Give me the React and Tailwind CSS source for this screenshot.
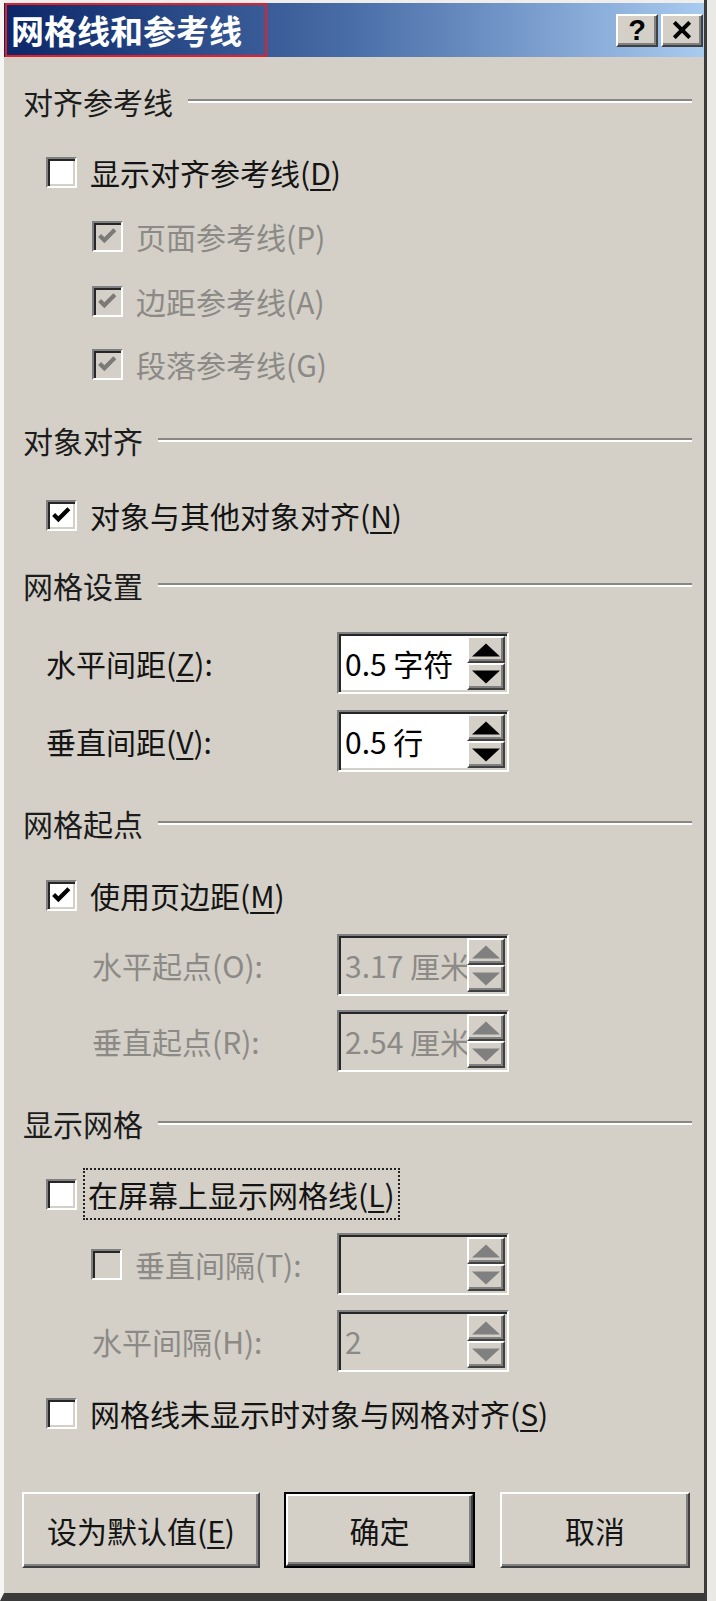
import React from "react";

const raised =
  "border-2 border-t-white border-l-white border-r-[#404040] border-b-[#404040] shadow-[inset_-2px_-2px_0_#808080] bg-[#d4d0c8]";
const sunken =
  "border-2 border-t-[#808080] border-l-[#808080] border-r-white border-b-white shadow-[inset_2px_2px_0_#262626,inset_-2px_-2px_0_#d4d0c8]";

function Key({ k, on = true }) {
  return (
    <>
      (<span className={on ? "underline decoration-2 underline-offset-[4px]" : ""}>{k}</span>)
    </>
  );
}

function CheckBox({ checked = false, disabled = false }) {
  return (
    <span
      className={`flex h-[31px] w-[31px] shrink-0 items-center justify-center ${sunken} ${
        disabled ? "bg-[#d4d0c8]" : "bg-white"
      }`}
    >
      {checked && (
        <svg viewBox="0 0 20 20" className="h-[21px] w-[21px]">
          <path
            d="M2.5 9 7 13.5 17 3.5"
            fill="none"
            stroke={disabled ? "#7c7a76" : "#000"}
            strokeWidth="4"
          />
        </svg>
      )}
    </span>
  );
}

function SpinBtn({ up, color }) {
  return (
    <div className={`flex flex-1 items-center justify-center ${raised}`}>
      <svg viewBox="0 0 30 14" className="h-[14px] w-[28px]">
        <path d={up ? "M15 0 30 14H0Z" : "M0 0H30L15 14Z"} fill={color} />
      </svg>
    </div>
  );
}

function SpinBox({ value, disabled = false }) {
  return (
    <div
      className={`flex h-[62px] w-[172px] shrink-0 p-[2px] ${sunken} ${
        disabled ? "bg-[#d4d0c8] text-[#8c8a86]" : "bg-white text-black"
      }`}
    >
      <div className="flex min-w-0 flex-1 items-center overflow-hidden whitespace-nowrap pl-[4px] text-[30px] leading-none">
        {value}
      </div>
      <div className="flex w-[38px] shrink-0 flex-col">
        <SpinBtn up color={disabled ? "#808080" : "#000"} />
        <SpinBtn color={disabled ? "#808080" : "#000"} />
      </div>
    </div>
  );
}

function Section({ title, className = "" }) {
  return (
    <div className={`flex h-[40px] items-center pl-[19px] pr-[12px] text-[30px] leading-none text-[#1c1c1c] ${className}`}>
      <span>{title}</span>
      <span className="ml-[15px] flex-1 border-t-2 border-b-2 border-t-[#8a8782] border-b-white" />
    </div>
  );
}

function CheckRow({ checked, disabled, indent, children, className = "" }) {
  return (
    <div
      className={`flex h-[40px] items-center text-[30px] leading-none ${
        indent ? "pl-[88px]" : "pl-[42px]"
      } ${disabled ? "text-[#8c8a86]" : "text-[#141414]"} ${className}`}
    >
      <CheckBox checked={checked} disabled={disabled} />
      <span className="ml-[13px] whitespace-nowrap">{children}</span>
    </div>
  );
}

function SpinRow({ label, value, disabled, indent, className = "" }) {
  return (
    <div className={`flex h-[62px] items-center text-[30px] leading-none ${className}`}>
      <div
        className={`flex h-full w-[333px] items-center whitespace-nowrap ${
          indent ? "pl-[88px]" : "pl-[42px]"
        } ${disabled ? "text-[#8c8a86]" : "text-[#141414]"}`}
      >
        {label}
      </div>
      <SpinBox value={value} disabled={disabled} />
    </div>
  );
}

function Button({ children, className = "", isDefault }) {
  return (
    <div className={`flex h-[76px] ${isDefault ? "border-2 border-black" : ""} ${className}`}>
      <div className={`flex flex-1 items-center justify-center text-[30px] leading-none text-[#141414] ${raised}`}>
        {children}
      </div>
    </div>
  );
}

export default function App() {
  return (
    <div className="flex h-[1601px] w-[716px] bg-[#ebe9e5] font-['Noto_Sans_CJK_SC','Noto_Sans',sans-serif]">
      <div className="flex h-full w-[707px] flex-col border-l-4 border-r-[3px] border-b-[8px] border-l-[#f6f5f3] border-r-[#3c3c3c] border-b-[#3a3a3a] bg-[#d4d0c8]">
        {/* title bar */}
        <div className="flex h-[57px] border-t-[3px] border-t-[#efeeec] bg-gradient-to-r from-[#0c2668] via-[#4a6ea8] to-[#a9cbf0]">
          <div className="ml-[1px] flex w-[262px] items-center border-2 border-[#e3202a] pl-[4px] text-[33px] font-bold leading-none text-white">
            网格线和参考线
          </div>
          <div className="ml-auto flex items-center gap-[3px] pr-[1px]">
            <div className={`flex h-[33px] w-[42px] items-center justify-center font-['Liberation_Sans',sans-serif] text-[29px] font-bold leading-none text-black ${raised}`}>
              ?
            </div>
            <div className={`flex h-[33px] w-[42px] items-center justify-center ${raised}`}>
              <svg viewBox="0 0 20 16" className="h-[18px] w-[22px]">
                <path d="M3 1 17 15M17 1 3 15" stroke="#000" strokeWidth="3.6" />
              </svg>
            </div>
          </div>
        </div>

        <Section title="对齐参考线" className="mt-[24px]" />
        <CheckRow className="mt-[31px]">
          显示对齐参考线<Key k="D" />
        </CheckRow>
        <CheckRow checked disabled indent className="mt-[24px]">
          页面参考线<Key k="P" on={false} />
        </CheckRow>
        <CheckRow checked disabled indent className="mt-[25px]">
          边距参考线<Key k="A" on={false} />
        </CheckRow>
        <CheckRow checked disabled indent className="mt-[23px]">
          段落参考线<Key k="G" on={false} />
        </CheckRow>

        <Section title="对象对齐" className="mt-[36px]" />
        <CheckRow checked className="mt-[35px]">
          对象与其他对象对齐<Key k="N" />
        </CheckRow>

        <Section title="网格设置" className="mt-[30px]" />
        <SpinRow
          className="mt-[27px]"
          label={<>水平间距<Key k="Z" />:</>}
          value="0.5 字符"
        />
        <SpinRow
          className="mt-[16px]"
          label={<>垂直间距<Key k="V" />:</>}
          value="0.5 行"
        />

        <Section title="网格起点" className="mt-[31px]" />
        <CheckRow checked className="mt-[32px]">
          使用页边距<Key k="M" />
        </CheckRow>
        <SpinRow
          className="mt-[19px]"
          indent
          disabled
          label="水平起点(O):"
          value="3.17 厘米"
        />
        <SpinRow
          className="mt-[14px]"
          indent
          disabled
          label="垂直起点(R):"
          value="2.54 厘米"
        />

        <Section title="显示网格" className="mt-[31px]" />
        <div className="mt-[25px] flex h-[52px] items-center pl-[42px] text-[30px] leading-none text-[#141414]">
          <CheckBox />
          <span className="ml-[6px] flex h-full items-center whitespace-nowrap border-2 border-dotted border-[#222] px-[3px]">
            在屏幕上显示网格线<Key k="L" />
          </span>
        </div>
        <div className="mt-[13px] flex h-[62px] items-center text-[30px] leading-none">
          <div className="flex h-full w-[333px] items-center whitespace-nowrap pl-[87px] text-[#8c8a86]">
            <CheckBox disabled />
            <span className="ml-[13px]">垂直间隔(T):</span>
          </div>
          <SpinBox value="" disabled />
        </div>
        <SpinRow
          className="mt-[15px]"
          indent
          disabled
          label="水平间隔(H):"
          value="2"
        />
        <CheckRow className="mt-[21px]">
          网格线未显示时对象与网格对齐<Key k="S" />
        </CheckRow>

        <div className="mt-[59px] flex pl-[18px]">
          <Button className="w-[238px]">
            设为默认值<Key k="E" />
          </Button>
          <Button isDefault className="ml-[24px] w-[191px]">
            确定
          </Button>
          <Button className="ml-[25px] w-[190px]">取消</Button>
        </div>
      </div>
    </div>
  );
}
